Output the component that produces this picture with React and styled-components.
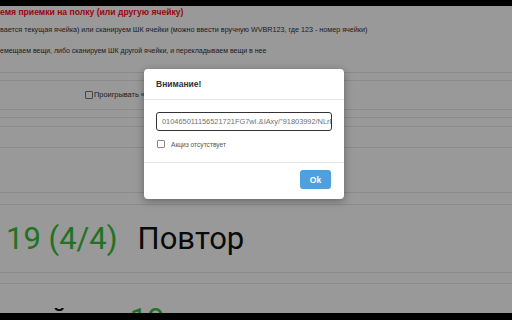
import React from "react";
import styled, { createGlobalStyle } from "styled-components";

const GlobalStyle = createGlobalStyle`
  html, body {
    margin: 0;
    padding: 0;
    height: 320px;
    background: #000;
    overflow: hidden;
  }
  body {
    font-family: "Liberation Sans", Arial, sans-serif;
  }
`;

// Экран с чёрными полосами сверху и снизу
const Screen = styled.div`
  height: 320px;
  overflow: hidden;
  display: flex;
  flex-direction: column;
  background: #000;
`;

const Bar = styled.div`
  flex: none;
  height: ${(props) => props.h}px;
  background: #000;
`;

// Страница под модальным окном
const Page = styled.div`
  position: relative;
  flex: none;
  height: 307px;
  background: #fff;
  overflow: hidden;
`;

const Intro = styled.div`
  height: 67px;
  border-bottom: 1px solid #e8e8e8;
  box-sizing: border-box;
`;

const Title = styled.h3`
  margin: 0;
  height: 14px;
  line-height: 13px;
  font-size: 8.6px;
  font-weight: bold;
  color: #f51414;
  white-space: nowrap;
`;

const Hint = styled.p`
  margin: 0;
  margin-top: ${(props) => props.top}px;
  font-size: ${(props) => props.size}px;
  line-height: 10px;
  color: #333;
  white-space: nowrap;
`;

const Row = styled.div`
  height: ${(props) => props.h}px;
  border-bottom: 1px solid #e8e8e8;
  box-sizing: border-box;
  display: flex;
  align-items: ${(props) => (props.align ? props.align : "center")};
  padding-left: ${(props) => (props.pl ? props.pl : 0)}px;
  white-space: nowrap;
`;

const SoundLabel = styled.label`
  display: flex;
  align-items: center;
  margin-top: 9px;
  font-size: 7.4px;
  color: #333;
`;

const SmallBox = styled.span`
  display: inline-block;
  width: 6px;
  height: 6px;
  border: 1px solid #777;
  border-radius: 1px;
  background: #fff;
  margin-right: 1px;
`;

const Big = styled.span`
  font-family: Roboto, "Liberation Sans", sans-serif;
  font-size: 31px;
  line-height: 31px;
  color: ${(props) => (props.green ? "#38be38" : "#111")};
  margin-left: ${(props) => (props.ml ? props.ml : 0)}px;
  margin-bottom: ${(props) => (props.mb ? props.mb : 0)}px;
`;

const Backdrop = styled.div`
  position: absolute;
  inset: 0;
  background: rgba(0, 0, 0, 0.4);
`;

const Modal = styled.div`
  position: absolute;
  left: 144px;
  top: 63px;
  width: 200px;
  background: #fff;
  border-radius: 4px;
  box-shadow: 0 2px 8px rgba(0, 0, 0, 0.35);
  overflow: hidden;
`;

const ModalHeader = styled.div`
  height: 31px;
  box-sizing: border-box;
  padding: 0 12px;
  display: flex;
  align-items: center;
  border-bottom: 1px solid #e5e5e5;
  font-size: 8.5px;
  font-weight: bold;
  color: #333;
`;

const ModalBody = styled.div`
  padding: 12px 12px 14px;
  border-bottom: 1px solid #e5e5e5;
`;

const CodeInput = styled.div`
  height: 19px;
  box-sizing: border-box;
  border: 1px solid #333;
  border-radius: 3px;
  padding: 0 5px;
  display: flex;
  align-items: center;
  overflow: hidden;
  white-space: nowrap;
  font-size: 7.4px;
  color: #707070;
`;

const CheckRow = styled.label`
  display: flex;
  align-items: center;
  margin-top: 9px;
  font-size: 6.6px;
  color: #555;
`;

const Box = styled.span`
  display: inline-block;
  width: 6px;
  height: 6px;
  border: 1px solid #888;
  border-radius: 1px;
  margin: 0 6px 0 1px;
`;

const ModalFooter = styled.div`
  display: flex;
  justify-content: flex-end;
  padding: 7px 13px 10px;
`;

const OkButton = styled.button`
  width: 31px;
  height: 19px;
  border: none;
  border-radius: 3px;
  background: #4fa0dc;
  color: #fff;
  font-family: "Liberation Sans", Arial, sans-serif;
  font-size: 8.5px;
  font-weight: bold;
  padding: 0;
`;

const App = () => {
  return (
    <>
      <GlobalStyle />
      <Screen>
        <Bar h={6} />
        <Page>
          <Intro>
            <Title>емя приемки на полку (или другую ячейку)</Title>
            <Hint top={5} size={7.2}>
              вается текущая ячейка) или сканируем ШК ячейки (можно ввести вручную WVBR123, где 123 - номер ячейки)
            </Hint>
            <Hint top={11} size={7}>
              емещаем вещи, либо сканируем ШК другой ячейки, и перекладываем вещи в нее
            </Hint>
          </Intro>
          <Row h={8} />
          <Row h={29} pl={85} align="flex-start">
            <SoundLabel>
              <SmallBox />
              Проигрывать «звук»
            </SoundLabel>
          </Row>
          <Row h={8} />
          <Row h={9} />
          <Row h={21} />
          <Row h={45} />
          <Row h={12} />
          <Row h={68} pl={6}>
            <Big green>19 (4/4)</Big>
            <Big ml={20}>Повтор</Big>
          </Row>
          <Row h={11} />
          <Row h={40} align="flex-end">
            <Big mb={-12}>ячейка</Big>
            <Big green ml={28} mb={-12}>19</Big>
          </Row>
          <Backdrop>
            <Modal>
              <ModalHeader>Внимание!</ModalHeader>
              <ModalBody>
                <CodeInput>010465011156521721FG7wI.&amp;IAxy/"91803992/NLrB.</CodeInput>
                <CheckRow>
                  <Box />
                  Акциз отсутствует
                </CheckRow>
              </ModalBody>
              <ModalFooter>
                <OkButton>Ok</OkButton>
              </ModalFooter>
            </Modal>
          </Backdrop>
        </Page>
        <Bar h={7} />
      </Screen>
    </>
  );
};

export default App;
